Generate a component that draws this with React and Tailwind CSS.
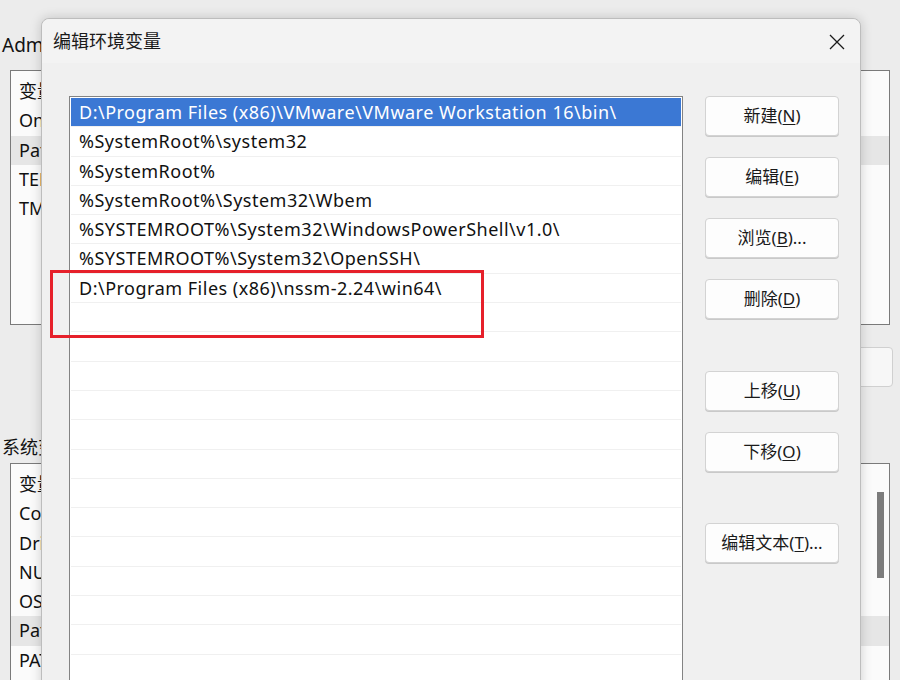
import React from 'react';

const font = { fontFamily: '"Noto Sans", "Noto Sans CJK SC", sans-serif' };

const paths = [
  'D:\\Program Files (x86)\\VMware\\VMware Workstation 16\\bin\\',
  '%SystemRoot%\\system32',
  '%SystemRoot%',
  '%SystemRoot%\\System32\\Wbem',
  '%SYSTEMROOT%\\System32\\WindowsPowerShell\\v1.0\\',
  '%SYSTEMROOT%\\System32\\OpenSSH\\',
  'D:\\Program Files (x86)\\nssm-2.24\\win64\\',
];

const userVars = ['变量', 'OneDrive', 'Path', 'TEMP', 'TMP'];
const sysVars = ['变量', 'ComSpec', 'DriverData', 'NUMBER_OF_PROCESSORS', 'OS', 'Path', 'PATHEXT'];

// button label with underlined access key, e.g. 新建(N)
const WinButton = ({ label, hotkey, suffix = '', className = '' }) => (
  <button
    className={`h-[40px] w-[134px] rounded-[4px] border border-[#d3d3d3] bg-[#fdfdfd] text-[17px] text-[#1a1a1a] shadow-[0_1px_0_#c9c9c9] ${className}`}
  >
    {label}(<span className="underline underline-offset-2">{hotkey}</span>){suffix}
  </button>
);

// the dialog covers most of this list, only the first letters show
const BgList = ({ items, highlight, className = '' }) => (
  <div className={`mx-[10px] border border-[#7a7a7a] bg-[#fbfbfb] pt-[6px] ${className}`}>
    {items.map((v, i) => (
      <div
        key={i}
        className={`h-[29.3px] whitespace-nowrap pl-[8px] text-[18px] leading-[29px] text-[#111] ${i === highlight ? 'bg-[#e6e6e6]' : ''}`}
      >
        {v}
      </div>
    ))}
  </div>
);

export default function App() {
  const emptyRows = Array.from({ length: 14 });

  return (
    <div className="relative h-[680px] w-[900px] overflow-hidden bg-[#ececec]" style={font}>
      {/* background window: environment variables */}
      <div className="flex flex-col pt-[30px]">
        <div className="h-[40px] whitespace-nowrap pl-[2px] text-[19px] leading-[30px] text-[#111]">
          Administrator 的用户变量
        </div>
        <BgList items={userVars} highlight={2} className="h-[255px]" />
        <div className="flex h-[112px] items-start justify-end pt-[22px] pr-[7px]">
          <div className="h-[40px] w-[120px] rounded-[4px] border border-[#d0d0d0] bg-[#f7f7f7]" />
        </div>
        <div className="h-[26px] whitespace-nowrap pl-[2px] text-[18px] leading-[20px] text-[#111]">
          系统变量(S)
        </div>
        <div className="relative">
          <BgList items={sysVars} highlight={5} className="h-[240px]" />
          <div className="absolute right-[16px] top-[29px] h-[86px] w-[7px] bg-[#7c7c7c]" />
        </div>
      </div>

      {/* edit dialog */}
      <div className="absolute left-[41px] top-[18px] h-[700px] w-[820px] rounded-t-[8px] border border-[#bdbdbd] bg-[#f0f0f0] shadow-[0_0_12px_rgba(0,0,0,0.18)]">
        <div className="flex h-[44px] items-center justify-between rounded-t-[8px] bg-[#f3f3f3] pl-[11px] pr-[15px]">
          <span className="text-[18px] text-[#1a1a1a]">编辑环境变量</span>
          <svg width="16" height="16" viewBox="0 0 16 16" className="mt-[1px]">
            <path d="M1 1 L15 15 M15 1 L1 15" stroke="#1a1a1a" strokeWidth="1.3" fill="none" />
          </svg>
        </div>

        <div className="flex pl-[27px] pt-[33px]">
          <div className="h-[600px] w-[614px] border border-[#838383] bg-white p-[1px]">
            {paths.map((p, i) => (
              <div
                key={i}
                className={`h-[29.3px] truncate border-b border-[#f0f0f0] pl-[8px] text-[18px] leading-[28px] tracking-[0.5px] ${
                  i === 0 ? 'bg-[#3b78d4] text-white' : 'text-[#111]'
                }`}
              >
                {p}
              </div>
            ))}
            {emptyRows.map((_, i) => (
              <div key={i} className="h-[29.3px] border-b border-[#f0f0f0]" />
            ))}
          </div>

          <div className="ml-[22px] flex flex-col">
            <WinButton label="新建" hotkey="N" />
            <WinButton label="编辑" hotkey="E" className="mt-[21px]" />
            <WinButton label="浏览" hotkey="B" suffix="..." className="mt-[21px]" />
            <WinButton label="删除" hotkey="D" className="mt-[21px]" />
            <WinButton label="上移" hotkey="U" className="mt-[52px]" />
            <WinButton label="下移" hotkey="O" className="mt-[21px]" />
            <WinButton label="编辑文本" hotkey="T" suffix="..." className="mt-[51px]" />
          </div>
        </div>
      </div>

      {/* red highlight drawn over the new entry */}
      <div className="absolute left-[50px] top-[270px] h-[68px] w-[434px] border-[3px] border-[#e6202a]" />
    </div>
  );
}
